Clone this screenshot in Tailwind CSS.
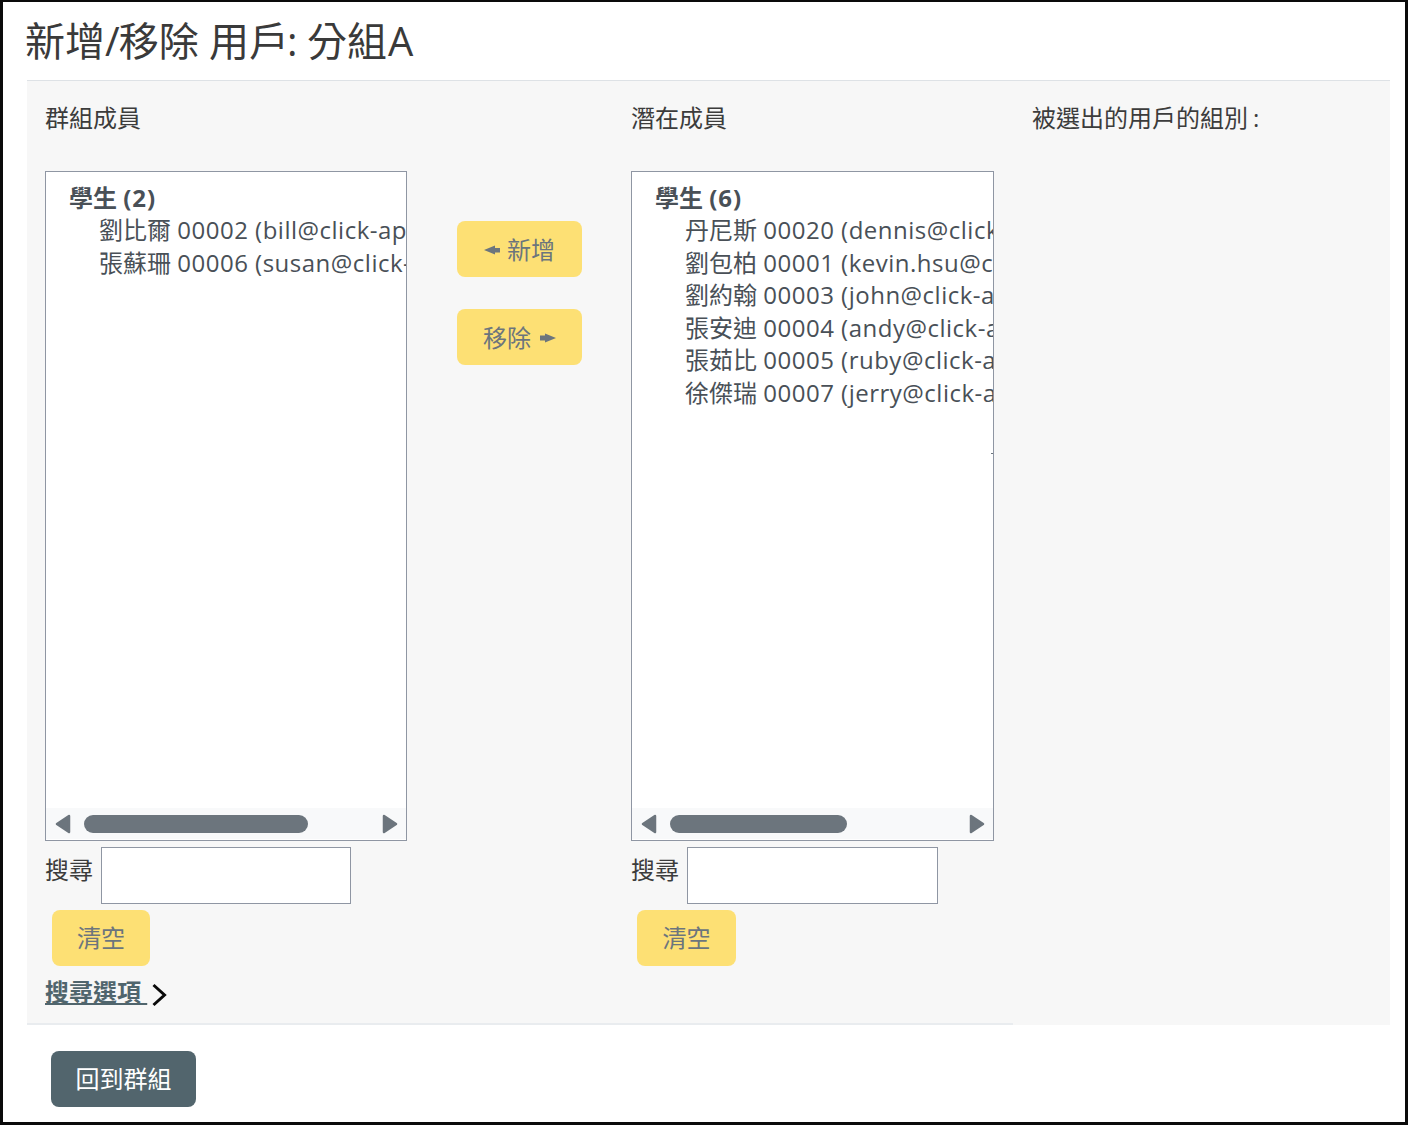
<!DOCTYPE html>
<html lang="zh-Hant">
<head>
<meta charset="utf-8">
<title>新增/移除 用戶</title>
<script src="https://cdn.jsdelivr.net/npm/@tailwindcss/browser@4"></script>
</head>
<body class="bg-white">
<div class="w-[1408px] h-[1125px] overflow-hidden border-[3px] border-t-2 border-[#0a0a0a] bg-white font-['Open_Sans','Noto_Sans_CJK_TC',sans-serif] text-[24px] text-[#3c3c3c]">
  <h1 class="h-[78px] pl-[22px] pt-[11px] text-[40px] leading-[56px] font-normal text-[#3a3a3a] whitespace-pre">新增<span class="tracking-[-1px]">/</span>移除 用戶<span class="-ml-[2px]">:</span><span class="tracking-[-1px]"> </span>分組<span class="ml-[1px]">A</span></h1>
  <div class="ml-[24px] mr-[15px] h-[945px] border-t border-[#dee2e6] bg-[#f7f7f7]">
    <div class="flex pl-[18px] pt-[18px]">
      <!-- members -->
      <div class="w-[362px]">
        <div class="h-[72px] leading-[38px]">群組成員</div>
        <div class="relative h-[670px] w-[362px] border border-[#8f96a3] bg-white overflow-hidden">
          <div class="pt-[9.5px] pl-[23px] leading-[32.6px] text-[#495057] whitespace-nowrap">
            <div class="font-bold">學生 <span class="tracking-[1px]">(2)</span></div>
            <div class="pl-[30px]">劉比爾 <span class="tracking-[0.5px]">00002 (bill@click-ap.com)</span></div>
            <div class="pl-[30px]">張蘇珊 <span class="tracking-[0.5px]">00006 (susan@click-ap.com)</span></div>
          </div>
          <div class="absolute left-0 right-0 bottom-[1px] h-[31px] bg-[#f8f9fa] flex items-center pl-[9px] pr-[8px]">
            <svg class="w-[16px] h-[20px] shrink-0" viewBox="0 0 16 20"><path d="M14 2 L2 10 L14 18 Z" fill="#6c757d" stroke="#6c757d" stroke-width="2.5" stroke-linejoin="round"/></svg>
            <div class="ml-[13px] w-[224px] h-[18px] rounded-full bg-[#6c757d]"></div>
            <svg class="ml-auto w-[16px] h-[20px] shrink-0" viewBox="0 0 16 20"><path d="M2 2 L14 10 L2 18 Z" fill="#6c757d" stroke="#6c757d" stroke-width="2.5" stroke-linejoin="round"/></svg>
          </div>
        </div>
        <div class="mt-[6px] flex items-center h-[57px] gap-[8px]">
          <span class="leading-[48px] pb-[11px]">搜尋</span>
          <input type="text" class="w-[250px] h-[57px] border border-[#8f96a3] bg-white">
        </div>
        <button class="ml-[7px] mt-[6px] block w-[98px] h-[56px] rounded-[8px] bg-[#fde074] text-[#6c757d] pb-[1px]">清空</button>
        <a class="mt-[9px] flex items-center h-[34px] font-bold text-[#50656d]">
          <span class="underline whitespace-pre">搜尋選項 </span>
          <svg class="ml-[4px] mt-[6px] w-[16px] h-[24px]" viewBox="0 0 16 24"><path d="M2.5 2 L13.5 12 L2.5 22" fill="none" stroke="#0a0a0a" stroke-width="3"/></svg>
        </a>
      </div>
      <!-- add / remove -->
      <div class="w-[224px] pl-[50px] pt-[122px] flex flex-col gap-[32px]">
        <button class="w-[125px] h-[56px] rounded-[8px] bg-[#fde074] text-[#6c757d] flex items-center justify-center gap-[7px]">
          <svg class="w-[16px] h-[10px] mt-[1px]" viewBox="0 0 16 10"><path d="M0 5 L11 0.5 V3 H16 V7.5 H11 V9.5 Z" fill="#6c757d"/></svg>
          <span class="pt-[2px]">新增</span>
        </button>
        <button class="w-[125px] h-[56px] rounded-[8px] bg-[#fde074] text-[#6c757d] flex items-center justify-center gap-[9px]">
          <span class="pt-[2px]">移除</span>
          <svg class="w-[16px] h-[10px] mt-[2px]" viewBox="0 0 16 10"><path d="M16 5 L5 9.5 V7.5 H0 V2.5 H5 V0.5 Z" fill="#6c757d"/></svg>
        </button>
      </div>
      <!-- potential -->
      <div class="w-[362px]">
        <div class="h-[72px] leading-[38px]">潛在成員</div>
        <div class="relative h-[670px] w-[363px] border border-[#8f96a3] bg-white overflow-hidden">
          <div class="pt-[9.5px] pl-[23px] leading-[32.6px] text-[#495057] whitespace-nowrap">
            <div class="font-bold">學生 <span class="tracking-[1px]">(6)</span></div>
            <div class="pl-[30px]">丹尼斯 <span class="tracking-[0.5px]">00020 (dennis@click-ap.com)</span></div>
            <div class="pl-[30px]">劉包柏 <span class="tracking-[0.5px]">00001 (kevin.hsu@click-ap.com)</span></div>
            <div class="pl-[30px]">劉約翰 <span class="tracking-[0.5px]">00003 (john@click-ap.com)</span></div>
            <div class="pl-[30px]">張安迪 <span class="tracking-[0.5px]">00004 (andy@click-ap.com)</span></div>
            <div class="pl-[30px]">張茹比 <span class="tracking-[0.5px]">00005 (ruby@click-ap.com)</span></div>
            <div class="pl-[30px]">徐傑瑞 <span class="tracking-[0.5px]">00007 (jerry@click-ap.com)</span></div>
          </div>
          <div class="absolute right-0 top-[281px] w-[2px] h-[1px] bg-[#6c757d]"></div>
          <div class="absolute left-0 right-0 bottom-[1px] h-[31px] bg-[#f8f9fa] flex items-center pl-[9px] pr-[8px]">
            <svg class="w-[16px] h-[20px] shrink-0" viewBox="0 0 16 20"><path d="M14 2 L2 10 L14 18 Z" fill="#6c757d" stroke="#6c757d" stroke-width="2.5" stroke-linejoin="round"/></svg>
            <div class="ml-[13px] w-[177px] h-[18px] rounded-full bg-[#6c757d]"></div>
            <svg class="ml-auto w-[16px] h-[20px] shrink-0" viewBox="0 0 16 20"><path d="M2 2 L14 10 L2 18 Z" fill="#6c757d" stroke="#6c757d" stroke-width="2.5" stroke-linejoin="round"/></svg>
          </div>
        </div>
        <div class="mt-[6px] flex items-center h-[57px] gap-[8px]">
          <span class="leading-[48px] pb-[11px]">搜尋</span>
          <input type="text" class="w-[251px] h-[57px] border border-[#8f96a3] bg-white">
        </div>
        <button class="ml-[6px] mt-[6px] block w-[99px] h-[56px] rounded-[8px] bg-[#fde074] text-[#6c757d] pb-[1px]">清空</button>
      </div>
      <!-- selected user's groups -->
      <div class="ml-[39px] h-[38px] leading-[37px] whitespace-nowrap">被選出的用戶的組別<span class="ml-[5px]">:</span></div>
    </div>
  </div>
  <div class="ml-[24px] w-[986px] border-t-2 border-[#e9ecef] -mt-[2px] relative"></div>
  <div class="pl-[48px] pt-[26px]">
    <button class="w-[145px] h-[56px] rounded-[8px] bg-[#52656d] text-white">回到群組</button>
  </div>
</div>
</body>
</html>
